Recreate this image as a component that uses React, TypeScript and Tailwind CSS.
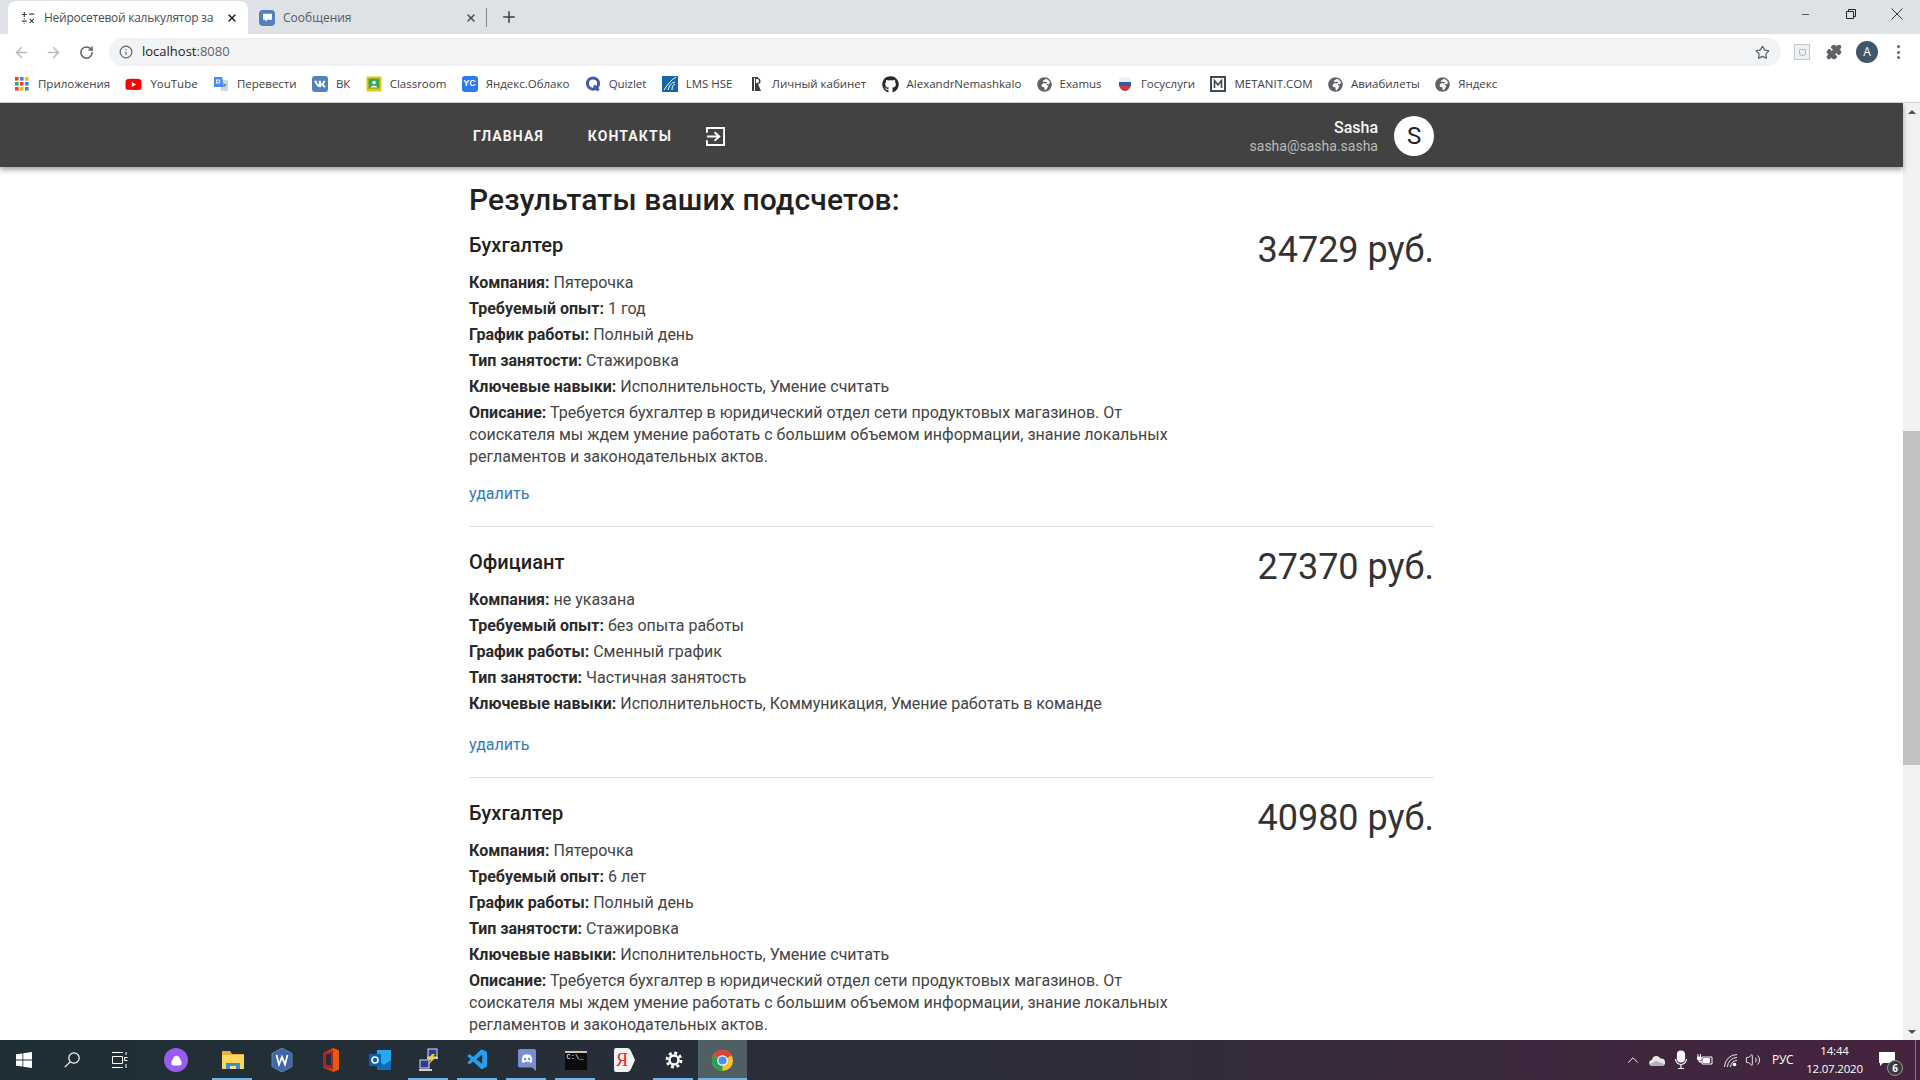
import { ArrowLeft, ArrowRight, RotateCw, Info, Star, Puzzle, X, Plus, Minus, ChevronUp, Volume2 } from "lucide-react";
import { FaGithub, FaYoutube, FaVk, FaGlobeAfrica } from "react-icons/fa";
import { VscVscode } from "react-icons/vsc";

const Globe = () => <FaGlobeAfrica className="w-[15px] h-[15px] text-[#5f6368]" />;

const bookmarks: { icon: React.ReactNode; label: string }[] = [
  {
    icon: (
      <svg viewBox="0 0 16 16" className="w-[16px] h-[16px]">
        {[1, 6, 11].map((x, i) =>
          [1, 6, 11].map((y, j) => (
            <rect key={`${i}${j}`} x={x} y={y} width="3.6" height="3.6" fill={[["#ea4335", "#4285f4", "#fbbc05"], ["#34a853", "#ea4335", "#4285f4"], ["#ea4335", "#fbbc05", "#34a853"]][j][i]} />
          )),
        )}
      </svg>
    ),
    label: "Приложения",
  },
  { icon: <FaYoutube className="w-[17px] h-[17px] text-[#ff0000]" />, label: "YouTube" },
  {
    icon: (
      <svg viewBox="0 0 16 16" className="w-[16px] h-[16px]">
        <path d="M7 4h8v11H8z" fill="#cfd8dc" />
        <path d="M1 1h8l2 10H1z" fill="#4a8af4" />
        <path d="M11 8l2 2m0-2l-2 3" stroke="#607d8b" fill="none" />
        <rect x="3.6" y="4" width="3" height="3" fill="none" stroke="#fff" />
      </svg>
    ),
    label: "Перевести",
  },
  {
    icon: (
      <span className="w-[16px] h-[16px] rounded-[3px] bg-[#5181b8] flex items-center justify-center">
        <FaVk className="w-[12px] h-[12px] text-white" />
      </span>
    ),
    label: "ВК",
  },
  {
    icon: (
      <svg viewBox="0 0 16 16" className="w-[16px] h-[16px]">
        <rect x="0.5" y="0.5" width="15" height="15" rx="1" fill="#f4c20d" />
        <rect x="2.5" y="2.5" width="11" height="10" fill="#34a853" />
        <circle cx="8" cy="6.5" r="1.8" fill="#fff" />
        <path d="M4.5 11.5c.6-2.4 6.4-2.4 7 0z" fill="#fff" />
      </svg>
    ),
    label: "Classroom",
  },
  {
    icon: (
      <span className="w-[16px] h-[16px] rounded-[3px] bg-[#2b7bf0] flex items-center justify-center text-white text-[9px] font-bold font-['Liberation_Sans',sans-serif]">
        YC
      </span>
    ),
    label: "Яндекс.Облако",
  },
  {
    icon: (
      <svg viewBox="0 0 16 16" className="w-[16px] h-[16px]">
        <circle cx="8" cy="7.6" r="5.6" fill="none" stroke="#4257b2" strokeWidth="3" />
        <path d="M9 9.5l4.5 5" stroke="#4257b2" strokeWidth="3" />
      </svg>
    ),
    label: "Quizlet",
  },
  {
    icon: (
      <svg viewBox="0 0 16 16" className="w-[16px] h-[16px]">
        <rect width="16" height="16" fill="#1565a9" />
        <path d="M2 14C6 8 9 4 14 1M6 14c1-4 3-7 7-8M10 14c0-3 1-5 3-6" stroke="#fff" strokeWidth="1" fill="none" />
      </svg>
    ),
    label: "LMS HSE",
  },
  {
    icon: (
      <svg viewBox="0 0 16 16" className="w-[16px] h-[16px]">
        <path d="M4 1h6v1H9a3 3 0 0 1 1 6l3 7H7V2H6v13H4z" fill="#3c3c3c" />
        <path d="M8 3h1a2 2 0 0 1 0 4H8z" fill="#fff" />
      </svg>
    ),
    label: "Личный кабинет",
  },
  { icon: <FaGithub className="w-[17px] h-[17px] text-[#24292e]" />, label: "AlexandrNemashkalo" },
  { icon: <Globe />, label: "Examus" },
  {
    icon: (
      <svg viewBox="0 0 16 16" className="w-[16px] h-[16px]">
        <path d="M2 2.5C5 .5 11 .5 14 2.5V6H2z" fill="#eceff1" />
        <path d="M2 6h12v4H2z" fill="#2d5fa8" />
        <path d="M2 10h12c-1 3-4 5-6 5s-5-2-6-5z" fill="#d8343e" />
      </svg>
    ),
    label: "Госуслуги",
  },
  {
    icon: (
      <svg viewBox="0 0 16 16" className="w-[16px] h-[16px]">
        <rect x="1" y="1" width="14" height="14" fill="none" stroke="#3f4a55" strokeWidth="2" />
        <path d="M4.5 12V4.5L8 9l3.5-4.5V12" stroke="#3f4a55" strokeWidth="1.6" fill="none" />
      </svg>
    ),
    label: "METANIT.COM",
  },
  { icon: <Globe />, label: "Авиабилеты" },
  { icon: <Globe />, label: "Яндекс" },
];

function Chrome() {
  return (
    <div className="font-['Open_Sans',sans-serif] shrink-0">
      <div className="h-[34px] bg-[#dee1e6] flex items-end">
        <div className="ml-[8px] w-[240px] h-[33px] bg-white rounded-t-[8px] flex items-center pl-[13px] pr-[10px] text-[12px] text-[#4a4d50]">
          <svg viewBox="0 0 16 16" className="w-[14px] h-[14px] shrink-0" stroke="#3c4043" fill="none" strokeWidth="1.3">
            <path d="M1 4h5.500M3.750 1.250v5.500M9.500 3.500h5.500M1 11.500h5.500M10 9l4.500 4.500m0-4.500L10 13.500" />
            <path d="M3.200 9h1M3.200 14h1" />
          </svg>
          <span className="ml-[9px] flex-1 overflow-hidden whitespace-nowrap tracking-[-0.25px]">Нейросетевой калькулятор зарг</span>
          <X className="w-[12px] h-[12px] ml-[12px] text-[#202124] shrink-0" strokeWidth={3} />
        </div>
        <div className="w-[234px] h-[33px] flex items-center pl-[11px] pr-[5px] text-[12px] text-[#55595d]">
          <span className="w-[16px] h-[16px] rounded-[4px] bg-[#5181b8] flex items-center justify-center shrink-0">
            <svg viewBox="0 0 10 10" className="w-[11px] h-[11px]">
              <path d="M1 1.500h8v5.500H5L3 9V7H1z" fill="#fff" />
            </svg>
          </span>
          <span className="ml-[8px] flex-1">Сообщения</span>
          <X className="w-[12px] h-[12px] text-[#45494d]" strokeWidth={3} />
        </div>
        <div className="w-px h-[19px] bg-[#80868b] mb-[7px] ml-[4px]" />
        <Plus className="w-[18px] h-[18px] ml-[13px] mb-[8px] text-[#3c4043]" strokeWidth={2} />
        <div className="flex-1" />
        <div className="self-start flex items-center h-[28px] text-[#202124]">
          <Minus className="w-[11px] h-[11px] mr-[35px]" strokeWidth={1.5} />
          <svg viewBox="0 0 10 10" className="w-[10px] h-[10px] mr-[35px]" fill="none" stroke="#202124">
            <path d="M.5 2.500h7v7h-7zM2.500 2.500v-2h7v7h-2" />
          </svg>
          <svg viewBox="0 0 12 12" className="w-[12px] h-[12px] mr-[17px]" fill="none" stroke="#202124" strokeWidth=".9">
            <path d="M.5.5l11 11m0-11l-11 11" />
          </svg>
        </div>
      </div>
      <div className="h-[32px] bg-white flex items-center pt-[4px]">
        <ArrowLeft className="w-[17px] h-[17px] ml-[13px] text-[#b7babd]" strokeWidth={2} />
        <ArrowRight className="w-[17px] h-[17px] ml-[15px] text-[#b7babd]" strokeWidth={2} />
        <RotateCw className="w-[15px] h-[15px] ml-[17px] text-[#5f6368]" strokeWidth={2.4} />
        <div className="ml-[15px] w-[1672px] h-[28px] bg-[#f1f3f4] rounded-full flex items-center pl-[10px] pr-[11px] text-[13px]">
          <Info className="w-[14px] h-[14px] text-[#5f6368]" strokeWidth={2} />
          <span className="ml-[9px] text-[#202124]">localhost<span className="text-[#5f6368]">:8080</span></span>
          <div className="flex-1" />
          <Star className="w-[15px] h-[15px] text-[#5f6368]" strokeWidth={2} />
        </div>
        <span className="ml-[13px] w-[16px] h-[16px] border border-[#c5c9cc] bg-[#eef1f3] flex items-center justify-center">
          <span className="w-[7px] h-[7px] rounded-b-[3px] border border-[#b3b9bd]" />
        </span>
        <Puzzle className="ml-[16px] w-[16px] h-[16px] text-[#5f6368] fill-[#5f6368]" />
        <span className="ml-[14px] w-[22px] h-[22px] rounded-full bg-[#3f5769] text-white text-[12px] flex items-center justify-center">A</span>
        <span className="ml-[19px] flex flex-col gap-[2.500px]">
          <i className="w-[3px] h-[3px] rounded-full bg-[#5f6368]" />
          <i className="w-[3px] h-[3px] rounded-full bg-[#5f6368]" />
          <i className="w-[3px] h-[3px] rounded-full bg-[#5f6368]" />
        </span>
      </div>
      <div className="h-[37px] bg-white border-b border-[#d0d2d4] flex items-center pl-[14px] gap-[15.3px] text-[11.5px] text-[#3c4043]">
        {bookmarks.map((b) => (
          <div key={b.label} className="flex items-center gap-[8px] whitespace-nowrap">
            {b.icon}
            <span>{b.label}</span>
          </div>
        ))}
      </div>
    </div>
  );
}

function Navbar() {
  return (
    <div className="h-[64px] pt-[1px] bg-[#424242] shadow-[0_3px_5px_rgba(0,0,0,0.35)] relative z-10 shrink-0">
      <div className="w-[965px] ml-[469px] h-full flex items-center text-white">
        <span className="ml-[4px] mt-[1px] text-[14px] font-bold tracking-[1.1px] text-[#f3f3f3]">ГЛАВНАЯ</span>
        <span className="ml-[44px] mt-[1px] text-[14px] font-bold tracking-[1.1px] text-[#f3f3f3]">КОНТАКТЫ</span>
        <svg viewBox="0 0 20 20" className="w-[19px] h-[19px] ml-[34px] mt-[1px]" fill="none" stroke="#fff" strokeWidth="2">
          <path d="M1 6V1h18v18H1v-5" />
          <path d="M1 10h12M9 5.500l5 4.500-5 4.500" />
        </svg>
        <div className="flex-1" />
        <div className="flex flex-col items-end mr-[16px] pt-[2px]">
          <span className="text-[16px] leading-[20px] font-medium text-[#f5f5f5]">Sasha</span>
          <span className="text-[14px] leading-[17px] text-[#bdbdbd]">sasha@sasha.sasha</span>
        </div>
        <span className="w-[40px] h-[40px] rounded-full bg-white text-[#212121] text-[24px] flex items-center justify-center">S</span>
      </div>
    </div>
  );
}

type Job = { title: string; salary: string; company: string; exp: string; schedule: string; type: string; skills: string; desc?: string };

const jobs: Job[] = [
  { title: "Бухгалтер", salary: "34729 руб.", company: "Пятерочка", exp: "1 год", schedule: "Полный день", type: "Стажировка", skills: "Исполнительность, Умение считать", desc: "Требуется бухгалтер в юридический отдел сети продуктовых магазинов. От соискателя мы ждем умение работать с большим объемом информации, знание локальных регламентов и законодательных актов." },
  { title: "Официант", salary: "27370 руб.", company: "не указана", exp: "без опыта работы", schedule: "Сменный график", type: "Частичная занятость", skills: "Исполнительность, Коммуникация, Умение работать в команде" },
  { title: "Бухгалтер", salary: "40980 руб.", company: "Пятерочка", exp: "6 лет", schedule: "Полный день", type: "Стажировка", skills: "Исполнительность, Умение считать", desc: "Требуется бухгалтер в юридический отдел сети продуктовых магазинов. От соискателя мы ждем умение работать с большим объемом информации, знание локальных регламентов и законодательных актов." },
];

function Line({ k, v }: { k: string; v: string }) {
  return (
    <p className="h-[26px] leading-[26px]">
      <b className="font-bold text-[#2a2a2a]">{k}:</b> {v}
    </p>
  );
}

function JobRow({ job }: { job: Job }) {
  return (
    <div className="border-b border-[#e0e0e0] flex justify-between pb-[21px] mb-[21px] last:border-b-0">
      <div className="w-[723px]">
        <h5 className="text-[20px] leading-[28px] font-medium mb-[11px] text-[#212121]">{job.title}</h5>
        <Line k="Компания" v={job.company} />
        <Line k="Требуемый опыт" v={job.exp} />
        <Line k="График работы" v={job.schedule} />
        <Line k="Тип занятости" v={job.type} />
        <Line k="Ключевые навыки" v={job.skills} />
        {job.desc && (
          <p className="leading-[22px] mt-[2px]">
            <b className="font-bold text-[#2a2a2a]">Описание:</b> {job.desc}
          </p>
        )}
        <a className={`block leading-[22px] text-[#2f7cc4] ${job.desc ? "mt-[15px]" : "mt-[17px]"}`}>удалить</a>
      </div>
      <div className="text-[36px] leading-[42px] text-[#333333] -mt-[2px]">{job.salary}</div>
    </div>
  );
}

function Scrollbar() {
  return (
    <div className="w-[17px] bg-[#f1f1f1] flex flex-col items-center shrink-0">
      <div className="h-[17px] flex items-center justify-center">
        <i className="border-x-[4px] border-x-transparent border-b-[4px] border-b-[#505050]" />
      </div>
      <div className="h-[311px]" />
      <div className="w-[17px] h-[334px] bg-[#c1c1c1]" />
      <div className="flex-1" />
      <div className="h-[17px] flex items-center justify-center">
        <i className="border-x-[4px] border-x-transparent border-t-[4px] border-t-[#505050]" />
      </div>
    </div>
  );
}

function Task({ children, on, active }: { children: React.ReactNode; on?: boolean; active?: boolean }) {
  return (
    <div className={`w-[49px] h-[40px] flex items-center justify-center relative ${active ? "bg-[#4f5f63]" : ""}`}>
      {children}
      {on && <i className={`absolute bottom-0 h-[2px] bg-[#74b5e6] ${active ? "left-0 right-0" : "left-[4px] right-[5px]"}`} />}
    </div>
  );
}

function Taskbar() {
  return (
    <div className="h-[40px] shrink-0 flex items-center bg-gradient-to-r from-[#1e2f35] via-[#2b2d3a] to-[#45233f] text-white font-['Open_Sans',sans-serif]">
      <div className="w-[48px] flex justify-center">
        <svg viewBox="0 0 16 16" className="w-[16px] h-[16px]" fill="#fff"><path d="M0 2.300l6.500-.9v6.200H0zM7.300 1.300L16 0v7.600H7.300zM0 8.400h6.500v6.200L0 13.700zM7.300 8.400H16V16l-8.700-1.200z" /></svg>
      </div>
      <div className="w-[48px] flex justify-center">
        <svg viewBox="0 0 16 16" className="w-[16px] h-[16px]" fill="none" stroke="#fff" strokeWidth="1.200"><circle cx="10" cy="6" r="5.200" /><path d="M6.200 9.800L.8 15.200" /></svg>
      </div>
      <div className="w-[48px] flex justify-center">
        <svg viewBox="0 0 16 16" className="w-[16px] h-[16px]" fill="none" stroke="#fff"><path d="M0 .5h11M0 15.500h11M.5 4.500h10v7H.5zM14 0v3M15.500 5.500h-3v3h3M14 12v4" /></svg>
      </div>
      <div className="w-[64px] flex justify-center">
        <span className="w-[24px] h-[24px] rounded-full bg-[#9a5cf0] flex items-center justify-center">
          <svg viewBox="0 0 12 12" className="w-[13px] h-[13px]"><path d="M6 1.500c2.500 0 3.800 3.500 4.800 6.500.4 1.500-.6 2.500-2 2.500H3.200c-1.400 0-2.400-1-2-2.500C2.200 5 3.500 1.500 6 1.500z" fill="#fff" /></svg>
        </span>
      </div>
      <Task on>
        <svg viewBox="0 0 22 20" className="w-[22px] h-[20px]"><path d="M0 1h8l2 3h12v15H0z" fill="#e8b23f" /><path d="M0 5h22v14H0z" fill="#fbd75f" /><path d="M4 13h14v6H4z" fill="#3c8ed0" /><path d="M8 16h6v3H8z" fill="#f6e08a" /></svg>
      </Task>
      <Task>
        <svg viewBox="0 0 24 24" className="w-[24px] h-[24px]"><path d="M12 0l10 5.500v13L12 24 2 18.500v-13z" fill="#3f67a8" stroke="#5b87a8" /><path d="M6.500 7l2.500 9.500L12 9l3 7.500L17.500 7" fill="none" stroke="#fff" strokeWidth="1.800" /></svg>
      </Task>
      <Task>
        <svg viewBox="0 0 18 24" className="w-[18px] h-[24px]"><path d="M1 5l10-5 6 2.500v19L11 24 1 19.500z" fill="#d83b01" /><path d="M11 0l6 2.500v19L11 24z" fill="#e8590c" /><path d="M1 5l10-2v18L1 19.500z" fill="#a4262c" /><path d="M4 7l5-1.500v12L4 16.500z" fill="#1e2f35" /></svg>
      </Task>
      <Task>
        <svg viewBox="0 0 24 24" className="w-[24px] h-[24px]"><path d="M9 2h14v20H9z" fill="#28a8ea" /><path d="M9 12l7 5 7-5v10H9z" fill="#0f6cbd" /><rect x="1" y="6" width="12" height="12" rx="1" fill="#0364b8" /><circle cx="7" cy="12" r="3" fill="none" stroke="#fff" strokeWidth="1.600" /></svg>
      </Task>
      <Task on>
        <svg viewBox="0 0 22 24" className="w-[22px] h-[24px]"><rect x="10" y="1" width="9" height="8" fill="#2b3a9e" stroke="#e0e0e0" /><rect x="2" y="12" width="9" height="8" fill="#2b3a9e" stroke="#e0e0e0" /><path d="M1 21h13v2H1zM9 9h11v2H9z" fill="#d0d0d0" /><path d="M14 6l-4 6h3l-3 5 7-7h-3l3-4z" fill="#f2d024" /></svg>
      </Task>
      <Task on><VscVscode className="w-[24px] h-[24px] text-[#2a9df0]" /></Task>
      <Task on>
        <svg viewBox="0 0 20 24" className="w-[20px] h-[24px]"><path d="M3 1h14a2 2 0 0 1 2 2v20l-4-3.500H3a2 2 0 0 1-2-2V3a2 2 0 0 1 2-2z" fill="#7a8cd4" /><path d="M5 14c-.5-3 .5-6 1.500-7 2-1 5-1 7 0 1 1 2 4 1.500 7-1.500 1-2 1-2.500.5l-.5-1c-1 .3-3 .3-4 0l-.5 1c-.5.5-1 .5-2.500-.5z" fill="#fff" /><circle cx="8" cy="11" r="1.200" fill="#7a8cd4" /><circle cx="12" cy="11" r="1.200" fill="#7a8cd4" /></svg>
      </Task>
      <Task on>
        <span className="w-[22px] h-[19px] bg-[#0c0c0c] border-t-2 border-[#c7c7c7] text-[7px] leading-[9px] pl-[2px] font-['Liberation_Mono',monospace]">C:\_</span>
      </Task>
      <Task>
        <span className="relative w-[23px] h-[24px] flex items-center justify-center">
          <svg viewBox="0 0 23 24" className="absolute inset-0 w-[23px] h-[24px]"><path d="M3 0h11c2 0 3 1 4 3l4 9-4 9c-1 2-2 3-4 3H3a2 2 0 0 1-2-2V2a2 2 0 0 1 2-2z" fill="#f2f2f2" /></svg>
          <span className="relative -ml-[5px] text-[#e52620] text-[18px] leading-[24px] font-['Liberation_Serif',serif]">Я</span>
        </span>
      </Task>
      <Task on>
        <svg viewBox="0 0 20 20" className="w-[20px] h-[20px]" fill="none" stroke="#fff"><circle cx="10" cy="10" r="4.500" strokeWidth="2.500" /><circle cx="10" cy="10" r="7" strokeWidth="2.800" strokeDasharray="2.900 2.600" /></svg>
      </Task>
      <Task on active>
        <svg viewBox="0 0 24 24" className="w-[23px] h-[23px]"><circle cx="12" cy="12" r="11" fill="#fbc02d" /><path d="M12 12L2.470 6.500A11 11 0 0 0 12 23z" fill="#2e9e4f" /><path d="M12 12L2.470 6.500A11 11 0 0 1 21.530 6.500z" fill="#db4437" /><circle cx="12" cy="12" r="5.500" fill="#fff" /><circle cx="12" cy="12" r="4.300" fill="#4a8cf0" /></svg>
      </Task>
      <div className="flex-1" />
      <ChevronUp className="w-[18px] h-[18px] mr-[7px]" strokeWidth={1.300} />
      <svg viewBox="0 0 16 11" className="w-[16px] h-[11px] mr-[8px]"><path d="M3.500 11a3 3 0 0 1-.5-6 4.500 4.500 0 0 1 8.500-1.500A3.800 3.800 0 0 1 13 11z" fill="#e8e8e8" /><path d="M1 9l6-3 8 3-2 2H3z" fill="#b8b0b8" /></svg>
      <svg viewBox="0 0 16 20" className="w-[16px] h-[20px] mr-[8px]" fill="none" stroke="#fff" strokeWidth="1.200"><rect x="4.500" y="1" width="7" height="11" rx="3.500" fill="#fff" /><path d="M2.500 9a5.500 5.500 0 0 0 11 0M8 14.500V18M5 18.500h6" /></svg>
      <svg viewBox="0 0 16 12" className="w-[16px] h-[12px] mr-[11px]" fill="none" stroke="#fff"><path d="M1 0v3M3.500 0v3" /><path d="M.5 3h3.500v2.500H.5zM2 5.500V8h3" fill="#fff" /><path d="M5 3h10v7H5z" /><path d="M6.500 4.500h6v4h-6z" fill="#fff" /></svg>
      <svg viewBox="0 0 13 13" className="w-[13px] h-[13px] mr-[8px]" fill="none" stroke="#fff" strokeWidth=".9"><path d="M.5 13A12.500 12.500 0 0 1 13 .5M3.500 13A9.500 9.500 0 0 1 13 3.500M6.500 13A6.500 6.500 0 0 1 13 6.500" /><circle cx="10.500" cy="10.500" r="1.800" fill="#fff" stroke="none" /></svg>
      <Volume2 className="w-[16px] h-[16px] mr-[11px]" strokeWidth={1.300} />
      <span className="text-[12px] w-[22px] whitespace-nowrap mr-[14px] tracking-[-0.3px]">РУС</span>
      <div className="flex flex-col items-center w-[53px] text-[11.5px] leading-[18px] mr-[14px] whitespace-nowrap tracking-[-0.2px]">
        <span>14:44</span>
        <span>12.07.2020</span>
      </div>
      <div className="w-[40px] h-[40px] flex items-center pl-[4px] relative">
        <svg viewBox="0 0 16 15" className="w-[16px] h-[15px] -mt-[1px]"><path d="M0 0h16v11H4l-3 3v-3H0z" fill="#fff" /></svg>
        <span className="absolute left-[12px] top-[20px] w-[16px] h-[16px] rounded-full bg-[#3a3a3a] border border-[#999] text-[10px] font-bold flex items-center justify-center">6</span>
      </div>
      <div className="w-[5px] h-[40px] border-l border-[#8a7a88]" />
    </div>
  );
}

export default function App() {
  return (
    <div className="w-[1920px] h-[1080px] overflow-hidden flex flex-col bg-white font-['Roboto',sans-serif] text-[16px] text-[#444444]">
      <Chrome />
      <div className="flex-1 min-h-0 flex">
        <div className="flex-1 min-w-0 flex flex-col">
          <Navbar />
          <div className="flex-1 min-h-0 overflow-hidden pl-[469px] pr-[469px]">
            <h3 className="text-[30px] leading-[36px] font-medium tracking-[0.13px] text-[#212121] mt-[15px] mb-[13px] w-[965px]">Результаты ваших подсчетов:</h3>
            <div className="w-[965px]">
              {jobs.map((j, i) => (
                <JobRow key={i} job={j} />
              ))}
            </div>
          </div>
        </div>
        <Scrollbar />
      </div>
      <Taskbar />
    </div>
  );
}
